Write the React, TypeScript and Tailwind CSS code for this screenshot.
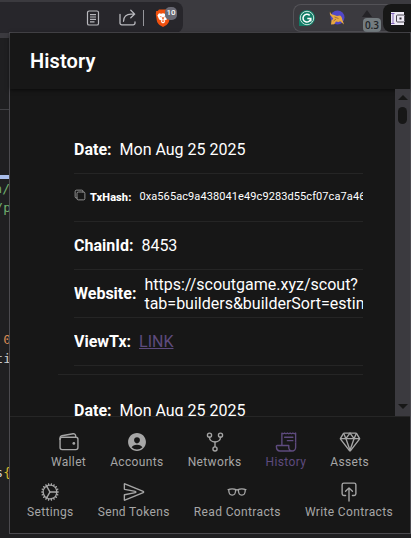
import type { ReactNode } from "react";
import {
  IoWalletOutline,
  IoPersonCircle,
  IoGitNetworkOutline,
  IoReceiptOutline,
  IoDiamondOutline,
  IoCogOutline,
  IoSendOutline,
  IoGlassesOutline,
  IoPushOutline,
  IoCopyOutline,
} from "react-icons/io5";
import type { IconType } from "react-icons";

function BrowserBar() {
  return (
    <div className="relative flex h-[38px] w-full bg-[#3b3a3f]">
      <div className="mt-[2px] flex h-[31px] w-[183px] items-center rounded-r-[8px] bg-[#27262b] pl-[86px]">
        <svg className="h-[16px] w-[14px] shrink-0" viewBox="0 0 14 16" fill="none" stroke="#b9b9be" strokeWidth="1.2">
          <rect x="1.5" y="1" width="11" height="14" rx="1.6" />
          <path d="M4 4.6h6M4 7h6M4 9.4h6M4 11.8h4.5" />
        </svg>
        <svg className="ml-[19px] h-[17px] w-[17px] shrink-0" viewBox="0 0 17 17" fill="none" stroke="#b9b9be" strokeWidth="1.3" strokeLinecap="round" strokeLinejoin="round">
          <path d="M1 5.5V14a1.8 1.8 0 0 0 1.8 1.8h11.4A1.8 1.8 0 0 0 16 14v-1" />
          <path d="M4.5 12.3c0-4.500 3-7.200 7.500-7.200h3.500M11.800 1.300l3.900 3.800-3.900 3.600" />
        </svg>
        <div className="ml-[7px] h-[16px] w-px shrink-0 bg-[#96969b]" />
        <div className="relative ml-[11px] h-[20px] w-[22px] shrink-0">
          <svg className="h-[20px] w-[16px]" viewBox="0 0 16 20">
            <path d="M4 1.500h8l1.300 1.400 1.500.2.400 3-1 6.500c-.4 2.200-1.300 3.300-2.700 4.300L8 19l-3.500-2.100c-1.400-1-2.300-2.100-2.700-4.300L.8 6.100l.4-3 1.500-.2z" fill="#f0500e" />
            <path d="M4 5.200l2.200.5L8 5.200l1.800.5 2.200-.5 1.600 2.200-1.800 4-2.100 1.100.5 1.500L8 15.500 5.800 14l.5-1.500-2.100-1.100-1.800-4z" fill="#fff" />
            <path d="M4.600 8l2.100.7-.6.900zM11.400 8l-2.100.7.6.9zM7.400 9h1.200L8.800 11 8 11.800 7.200 11zM6.400 13l1.600-.8 1.600.8-1.600 1z" fill="#f0500e" />
          </svg>
          <span className="absolute -top-[1px] left-[10px] flex h-[13px] w-[12px] items-center justify-center rounded-[5px] bg-[#696974] font-['Roboto',sans-serif] text-[8px] font-medium text-white">
            10
          </span>
        </div>
      </div>
      <div className="ml-auto mt-[4px] flex h-[28px] w-[118px] items-center rounded-l-[8px] border border-r-0 border-[#535257] pl-[5px]">
        <svg className="h-[16px] w-[16px] shrink-0" viewBox="0 0 16 16">
          <path d="M0 16V8a8 8 0 1 1 8 8z" fill="#127c66" />
          <circle cx="8" cy="8" r="6.700" fill="none" stroke="#d7ece6" strokeWidth=".9" />
          <path d="M10.700 5.400A3.900 3.900 0 1 0 11.800 8.500H8.300M11.800 8.500v3" fill="none" stroke="#fff" strokeWidth="1.500" />
        </svg>
        <svg className="ml-[14px] h-[16px] w-[16px] shrink-0" viewBox="0 0 16 16">
          <circle cx="8.500" cy="7.500" r="7" fill="#5147c8" />
          <path d="M1 1.500c.3 2 1.500 3 3.500 3.300L8 6l3-.5c1.500.8 2 2.500 2.300 4l1.700 5-3.600-3.300-2 .8-2.400-.4-1.800 2.600-3.200.3.500-4 1.800-1.800L2.500 6.500C1 5.500.5 3.500 1 1.500z" fill="#e9a940" />
          <path d="M5.500 7l4 1.500M4.500 11l2.500-2" stroke="#8f6040" strokeWidth=".8" />
        </svg>
        <div className="relative ml-[12px] h-[28px] w-[20px] shrink-0">
          <div className="mx-auto mt-[6px] h-0 w-0 border-x-[5px] border-b-[7px] border-x-transparent border-b-[#242327]" />
          <span className="absolute left-[6px] top-[14px] flex h-[14px] w-[18px] items-center justify-center rounded-[4px] bg-[#747c80] font-['Open_Sans',sans-serif] text-[10px] font-semibold text-[#202326]">
            0.3
          </span>
        </div>
        <div className="ml-[6px] flex h-[28px] w-[28px] shrink-0 items-center rounded-l-[8px] bg-[#171717] pl-[8px]">
          <svg className="h-[13px] w-[14px]" viewBox="0 0 14 13">
            <path d="M0 0h13v3h1v7h-1v3H0z" fill="#eeeaf4" />
            <path d="M0 1.500h3.500M2 2v9M0 11.500h3.500" stroke="#8266b8" strokeWidth="1" fill="none" />
            <rect x="5.500" y="3" width="8" height="7" rx="1" fill="none" stroke="#4b4751" strokeWidth="1" />
            <rect x="8.500" y="5.500" width="2" height="2" fill="#29252f" />
          </svg>
        </div>
      </div>
    </div>
  );
}

function EditorStrip() {
  return (
    <div className="flex h-[500px] w-[10px] flex-col items-end overflow-hidden whitespace-pre bg-[#1f1f21] font-['DejaVu_Sans_Mono',monospace] text-[13px] leading-[19px] text-[#d0d0d0]">
      <div className="h-[72px] w-full shrink-0 border-b border-[#414145]" />
      <div className="h-[65px] shrink-0" />
      <div className="h-[4px] w-full shrink-0 bg-[#a9bdea]" />
      <div className="shrink-0 text-[#6fae6e]">n/</div>
      <div className="-mr-px shrink-0 text-[#6fae6e]">/p</div>
      <div className="-mr-px mt-[113px] shrink-0 text-[#d98a54]">0</div>
      <div className="-mr-px shrink-0">ti</div>
      <div className="-mr-px mt-[95px] shrink-0">
        s<span className="text-[#d6b62c]">{"{"}</span>
      </div>
    </div>
  );
}

function Row({ label, children, small = false }: { label: string; children: ReactNode; small?: boolean }) {
  return (
    <div className={`flex h-[48px] items-center overflow-hidden border-b border-[#252525] ${small ? "text-[11px]" : "text-[16px] leading-[19px]"}`}>
      {small && <IoCopyOutline className="mr-[4px] mb-[5px] h-[12px] w-[12px] shrink-0 text-[#b5b5b5]" />}
      <b className={`mr-[8px] shrink-0 ${small ? "pt-px font-extrabold tracking-[0.1px]" : "font-bold"}`}>{label}</b>
      {children}
    </div>
  );
}

function Scrollbar() {
  return (
    <div className="flex w-[15px] shrink-0 flex-col items-center bg-[#3b3a3f]">
      <div className="mt-[6px] h-0 w-0 border-x-[5px] border-b-[5px] border-x-transparent border-b-[#171717]" />
      <div className="mt-[7px] h-[17px] w-[9px] rounded-full bg-[#171717]" />
      <div className="mb-[7px] mt-auto h-0 w-0 border-x-[5px] border-t-[5px] border-x-transparent border-t-[#171717]" />
    </div>
  );
}

function Tab({ icon: Icon, label, active = false }: { icon: IconType; label: string; active?: boolean }) {
  return (
    <div className={`flex h-[50px] flex-col items-center px-[12px] pt-[5px] ${active ? "text-[#5e4b7e]" : "text-[#a6a6a6]"}`}>
      <Icon className="h-[22px] w-[22px]" />
      <span className="whitespace-nowrap text-[12px] leading-[18px] tracking-[0.03em]">{label}</span>
    </div>
  );
}

export default function App() {
  return (
    <div className="relative h-[545px] w-[411px] overflow-hidden bg-white">
      <div className="h-[538px] bg-[#1f1f21]">
        <BrowserBar />
        <EditorStrip />
      </div>
      {/* Extension popup over the browser window */}
      <div className="absolute left-[9px] top-[32px] flex h-[502px] w-[402px] flex-col border border-[#4b4a4f] bg-[#171717] font-['Roboto',sans-serif] text-white">
        <header className="flex h-[56px] shrink-0 items-center bg-[#171717] px-[20px] text-[20px] font-semibold tracking-[0.1px] shadow-[0_1px_4px_rgba(0,0,0,0.6)]">
          History
        </header>
        <div className="flex h-[327px] shrink-0 overflow-hidden">
          <div className="flex-1 overflow-hidden pl-[48px] pr-[32px] pt-[37px]">
            <div className="border-b border-[#252525] pb-[8px] pl-[16px]">
              <Row label="Date:">Mon Aug 25 2025</Row>
              <Row label="TxHash:" small>
                <span className="tracking-[0.09px]">0xa565ac9a438041e49c9283d55cf07ca7a46e31</span>
              </Row>
              <Row label="ChainId:">8453</Row>
              <Row label="Website:">
                <span className="whitespace-nowrap">
                  https://scoutgame.xyz/scout?
                  <br />
                  tab=builders&amp;builderSort=estimated
                </span>
              </Row>
              <Row label="ViewTx:">
                <span className="text-[#5e4b7e] underline">LINK</span>
              </Row>
            </div>
            <div className="pl-[16px] pt-[12px]">
              <Row label="Date:">Mon Aug 25 2025</Row>
            </div>
          </div>
          <Scrollbar />
        </div>
        <footer className="flex flex-1 flex-col border-t border-[#262626] pt-[9px]">
          <nav className="flex justify-center">
            <Tab icon={IoWalletOutline} label="Wallet" />
            <Tab icon={IoPersonCircle} label="Accounts" />
            <Tab icon={IoGitNetworkOutline} label="Networks" />
            <Tab icon={IoReceiptOutline} label="History" active />
            <Tab icon={IoDiamondOutline} label="Assets" />
          </nav>
          <nav className="flex justify-center">
            <Tab icon={IoCogOutline} label="Settings" />
            <Tab icon={IoSendOutline} label="Send Tokens" />
            <Tab icon={IoGlassesOutline} label="Read Contracts" />
            <Tab icon={IoPushOutline} label="Write Contracts" />
          </nav>
        </footer>
      </div>
    </div>
  );
}
